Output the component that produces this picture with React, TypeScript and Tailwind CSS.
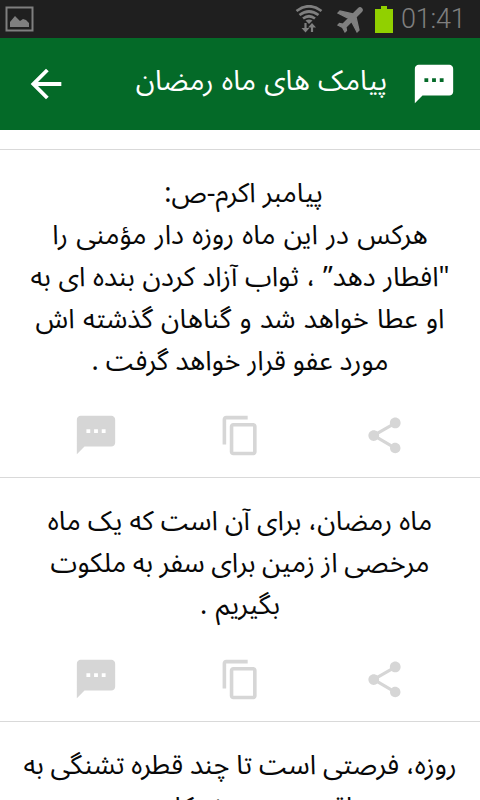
import type { IconType } from 'react-icons';
import { MdArrowBack, MdContentCopy, MdShare, MdSms } from 'react-icons/md';

type Line = { text: string; className: string };

const messages: Line[][] = [
  [
    { text: 'پیامبر اکرم-ص:', className: 'pl-[7px]' },
    { text: 'هرکس در این ماه روزه دار مؤمنی را', className: '[word-spacing:1.3px]' },
    { text: '"افطار دهد” ، ثواب آزاد کردن بنده ای به', className: '[word-spacing:0.6px]' },
    { text: 'او عطا خواهد شد و گناهان گذشته اش', className: '[word-spacing:1.3px]' },
    { text: 'مورد عفو قرار خواهد گرفت .', className: '' },
  ],
  [
    { text: 'ماه رمضان، برای آن است که یک ماه', className: '[word-spacing:0.1px]' },
    { text: 'مرخصی از زمین برای سفر به ملکوت', className: '[word-spacing:-0.5px]' },
    { text: 'بگیریم .', className: '[word-spacing:1.5px]' },
  ],
  [
    { text: 'روزه، فرصتی است تا چند قطره تشنگی به', className: '[word-spacing:-0.2px]' },
    { text: 'ساقی سر و صفر کلام سبز', className: '' },
  ],
];

function StatusBar() {
  return (
    <div className="flex h-[38px] items-center bg-[#1f1f1f] pr-[13px] pl-[5px] text-[#7f7f7f]">
      <svg width="29" height="26" viewBox="0 0 29 26">
        <rect x="1.5" y="1.5" width="26" height="23" fill="none" stroke="currentColor" strokeWidth="2" />
        <path d="M5 21v-5l5-6 5 5 3-2 3 1 3 3v4z" fill="currentColor" />
      </svg>
      <svg className="mr-[12px] ml-auto" width="28" height="28" viewBox="0 0 28 28" fill="none" stroke="currentColor">
        <path d="M1.500 6q12.500-9.500 25 0M4.500 10q9.500-7 19 0M8 13.500q6-4.500 12 0" strokeWidth="2.700" />
        <path d="M10.500 15.500q3.500-2 7 0L14 19z" fill="currentColor" stroke="none" />
        <path d="M10.500 18v7M17 27v-7" strokeWidth="2.200" />
        <path d="M6.500 23h8l-4 4.500zM13 22.500h8L17 18z" fill="currentColor" stroke="none" />
      </svg>
      <svg className="mr-[6px] size-[34px] rotate-45" viewBox="0 0 24 24" fill="currentColor" stroke="currentColor">
        <path
          d="M21 16v-2l-8-5V3.500c0-.83-.67-1.500-1.500-1.500S10 2.670 10 3.500V9l-8 5v2l8-2.500V19l-2 1.500V22l3.500-1 3.500 1v-1.500L13 19v-5.500l8 2.500z"
          strokeWidth="0.9"
        />
      </svg>
      <svg className="mr-[8px]" width="18" height="27" viewBox="0 0 18 27">
        <path d="M0 3h6V0h6v3h6v24H0z" fill="#91d000" />
      </svg>
      <span className="w-[66px] font-[Roboto] text-[27px] leading-none font-light tracking-[-0.2px]">01:41</span>
    </div>
  );
}

function Header() {
  return (
    <header className="flex h-[92px] items-center bg-[#046a28] pr-[23px] pl-[23px] text-white">
      <MdArrowBack className="size-[46px]" />
      <h1
        dir="rtl"
        className="mr-[24px] ml-auto pb-[5px] text-[28px] leading-none whitespace-nowrap [word-spacing:1px]"
      >
        پیامک های ماه رمضان
      </h1>
      <MdSms className="size-[46px]" />
    </header>
  );
}

function Action({ icon: Icon, className }: { icon: IconType; className: string }) {
  return (
    <button className="flex size-12 items-center justify-center text-[#d6d6d6]">
      <Icon className={className} />
    </button>
  );
}

function MessageCard({ lines }: { lines: Line[] }) {
  return (
    <article className="border-b border-[#d9d9d9] pt-[23px] pb-[18px]">
      <div dir="rtl" className="flex flex-col items-center text-[27px] leading-[42px] whitespace-nowrap">
        {lines.map((line) => (
          <p key={line.text} className={line.className}>
            {line.text}
          </p>
        ))}
      </div>
      <div className="mt-[28px] flex justify-between px-[72px]">
        <Action icon={MdSms} className="size-[46px]" />
        <Action icon={MdContentCopy} className="size-[43px]" />
        <Action icon={MdShare} className="size-[43px]" />
      </div>
    </article>
  );
}

export default function App() {
  return (
    <div className="h-[800px] w-[480px] overflow-hidden bg-white font-['Noto_Sans_Arabic','Noto_Sans','DejaVu_Sans',sans-serif] text-[#080808]">
      <StatusBar />
      <Header />
      <main className="mt-[19px] border-t border-[#d9d9d9]">
        {messages.map((lines) => (
          <MessageCard key={lines[0].text} lines={lines} />
        ))}
      </main>
    </div>
  );
}
